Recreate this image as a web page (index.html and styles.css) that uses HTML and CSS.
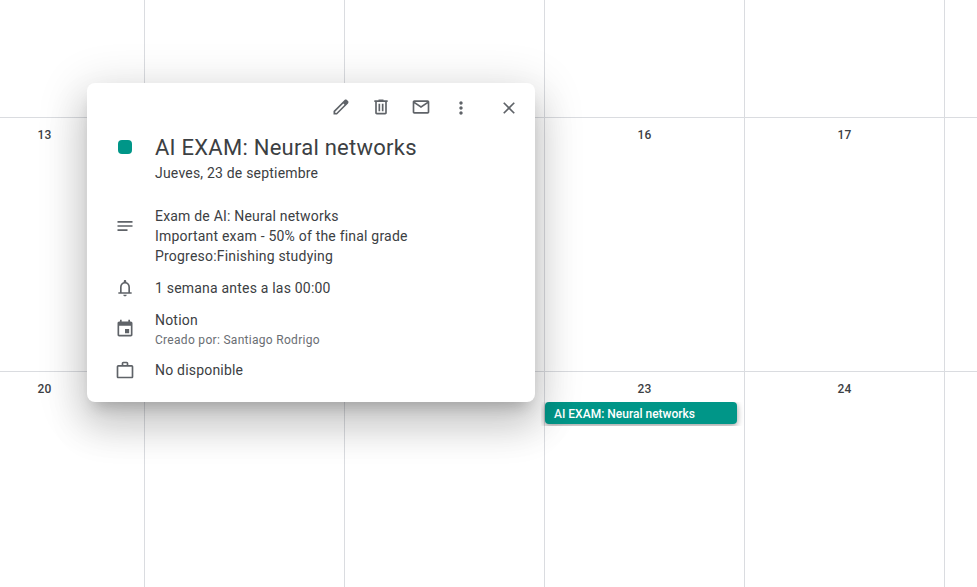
FILE: index.html
```html
<!DOCTYPE html>
<html lang="es">
<head>
<meta charset="utf-8">
<title>Calendario</title>
<link rel="stylesheet" href="styles.css">
</head>
<body>
<main class="month">
  <div class="day"></div><div class="day"></div><div class="day"></div><div class="day"></div><div class="day"></div><div class="day"></div>
  <div class="day first"><span class="date">13</span></div><div class="day"></div><div class="day"></div><div class="day"><span class="date">16</span></div><div class="day"><span class="date">17</span></div><div class="day"></div>
  <div class="day first"><span class="date">20</span></div><div class="day"></div><div class="day"></div><div class="day"><span class="date">23</span><div class="chip">AI EXAM: Neural networks</div></div><div class="day"><span class="date">24</span></div><div class="day"></div>
</main>
<section class="dialog">
  <div class="toolbar">
    <svg class="icon" viewBox="0 0 24 24"><path d="M20.41 4.94l-1.35-1.35c-.78-.78-2.05-.78-2.83 0L3 16.82V21h4.18L20.41 7.77c.79-.78.79-2.05 0-2.83zm-14 14.12L5 19v-1.36l9.82-9.82 1.41 1.41-9.82 9.83z"/></svg>
    <svg class="icon" viewBox="0 0 24 24"><path d="M15 4V3H9v1H4v2h1v13c0 1.1.9 2 2 2h10c1.1 0 2-.9 2-2V6h1V4h-5zm2 15H7V6h10v13zM9 8h2v9H9zm4 0h2v9h-2z"/></svg>
    <svg class="icon" viewBox="0 0 24 24"><path d="M20 4H4c-1.1 0-2 .9-2 2v12c0 1.1.9 2 2 2h16c1.1 0 2-.9 2-2V6c0-1.1-.9-2-2-2zm-.8 2L12 10.8 4.8 6h14.4zM4 18V7.87l8 5.33 8-5.33V18H4z"/></svg>
    <svg class="icon more" viewBox="0 0 24 24"><path d="M12 8c1.1 0 2-.9 2-2s-.9-2-2-2-2 .9-2 2 .9 2 2 2zm0 2c-1.1 0-2 .9-2 2s.9 2 2 2 2-.9 2-2-.9-2-2-2zm0 6c-1.1 0-2 .9-2 2s.9 2 2 2 2-.9 2-2-.9-2-2-2z"/></svg>
    <svg class="icon close" viewBox="0 0 24 24"><path d="M19 6.41L17.59 5 12 10.59 6.41 5 5 6.41 10.59 12 5 17.59 6.41 19 12 13.41 17.59 19 19 17.59 13.41 12z"/></svg>
  </div>
  <div class="row heading">
    <span class="swatch"></span>
    <div><h1>AI EXAM: Neural networks</h1><p>Jueves, 23 de septiembre</p></div>
  </div>
  <div class="row description">
    <svg class="icon" viewBox="0 0 24 24"><path d="M3 6h18v2H3zM3 11h18v2H3zM3 16h12v2H3z"/></svg>
    <p>Exam de AI: Neural networks<br>Important exam - 50% of the final grade<br>Progreso:Finishing studying</p>
  </div>
  <div class="row reminder">
    <svg class="icon" viewBox="0 0 24 24"><path d="M18 17v-6c0-3.07-1.63-5.64-4.5-6.32V4c0-.83-.67-1.5-1.5-1.5s-1.5.67-1.5 1.5v.68C7.64 5.36 6 7.92 6 11v6H4v2h16v-2h-2zm-2 0H8v-6c0-2.48 1.51-4.5 4-4.5s4 2.02 4 4.5v6zm-4 5c1.1 0 2-.9 2-2h-4c0 1.1.9 2 2 2z"/></svg>
    <p>1 semana antes a las 00:00</p>
  </div>
  <div class="row source">
    <svg class="icon" viewBox="0 0 24 24"><path d="M17 12h-5v5h5v-5zM16 1v2H8V1H6v2H5c-1.11 0-1.99.9-1.99 2L3 19c0 1.1.89 2 2 2h14c1.1 0 2-.9 2-2V5c0-1.1-.9-2-2-2h-1V1h-2zm3 18H5V8h14v11z"/></svg>
    <div><p>Notion</p><p class="creator">Creado por: Santiago Rodrigo</p></div>
  </div>
  <div class="row status">
    <svg class="icon" viewBox="0 0 24 24"><path d="M20 6h-4V4c0-1.1-.9-2-2-2h-4c-1.1 0-2 .9-2 2v2H4c-1.1 0-2 .9-2 2v12c0 1.1.9 2 2 2h16c1.1 0 2-.9 2-2V8c0-1.1-.9-2-2-2zM10 4h4v2h-4V4zm10 16H4V8h16v12z"/></svg>
    <p>No disponible</p>
  </div>
</section>
</body>
</html>
```
FILE: styles.css
```css
* { box-sizing: border-box; }
body {
  margin: 0;
  background: #fff;
  color: #3c4043;
  font: 400 14px/20px Roboto, "Liberation Sans", sans-serif;
  letter-spacing: .2px;
}
h1, p { margin: 0; }
.month {
  display: grid;
  grid-template-columns: 145px repeat(4, 200px) 1fr;
  grid-template-rows: 118px 254px 1fr;
  height: 587px;
}
.day {
  border-right: 1px solid #dadce0;
  border-bottom: 1px solid #dadce0;
  padding-top: 9px;
}
.day:nth-child(6n) { border-right: 0; }
.day:nth-child(n + 13) { border-bottom: 0; }
.first { padding-right: 55px; }
.date {
  display: block;
  text-align: center;
  font-size: 12px;
  line-height: 16px;
  font-weight: 500;
  letter-spacing: .3px;
}
.chip {
  width: 192px;
  height: 22px;
  margin-top: 5px;
  padding: 1px 0 0 9px;
  border-radius: 4px;
  background: #009688;
  color: #fff;
  font-size: 12px;
  font-weight: 500;
  line-height: 22px;
  letter-spacing: 0;
  box-shadow: 0 2px 6px rgba(0, 0, 0, .4);
  clip-path: inset(0 -8px -2px -4px);
}
.dialog {
  position: absolute;
  left: 87px;
  top: 83px;
  width: 448px;
  height: 319px;
  border-radius: 8px;
  background: #fff;
  box-shadow: 0 24px 38px 3px rgba(0, 0, 0, .14), 0 9px 46px 8px rgba(0, 0, 0, .12), 0 11px 15px -7px rgba(0, 0, 0, .2);
}
.icon { width: 20px; height: 20px; flex: none; fill: #5f6368; }
.toolbar {
  display: flex;
  justify-content: flex-end;
  gap: 20px;
  height: 50px;
  padding: 14px 16px 0 0;
}
.more { margin-top: 1px; }
.close { margin: 1px 0 0 8px; }
.row { display: flex; padding-left: 28px; gap: 20px; }
.swatch {
  width: 14px;
  height: 14px;
  margin: 7px 3px 0;
  border-radius: 4px;
  background: #009688;
}
h1 {
  font-size: 22px;
  line-height: 28px;
  font-weight: 400;
  letter-spacing: .25px;
}
.heading > div { margin-top: 1px; }
.heading p { margin-top: 1px; }
.description { margin-top: 23px; }
.description .icon { margin-top: 10px; }
.row > p, .row > div { flex: none; }
.reminder, .source { margin-top: 12px; }
.status { margin-top: 10px; }
.source .icon { margin-top: 9px; }
.creator { font-size: 12px; line-height: 20px; letter-spacing: .3px; color: #6a6e73; }
```
